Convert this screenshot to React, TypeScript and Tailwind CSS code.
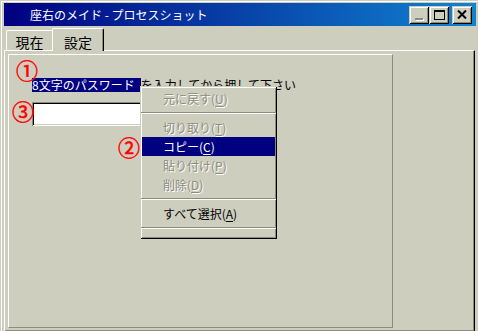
import React from "react";

function MenuItem({
  label,
  mn,
  disabled,
  active,
}: {
  label: string;
  mn: string;
  disabled?: boolean;
  active?: boolean;
}) {
  const color = active
    ? "bg-[#000080] text-white"
    : disabled
    ? "text-[#8c8c7c] [text-shadow:1px_1px_0_#ffffff]"
    : "text-black";
  return (
    <div className={`h-[19px] mx-[2px] pl-[21px] flex items-center text-[12px] leading-none whitespace-nowrap ${color}`}>
      <span>
        {label}(<span className="underline underline-offset-[2px]">{mn}</span>)
      </span>
    </div>
  );
}

function Sep() {
  return (
    <div className="h-[10px] mx-[1px] flex items-center">
      <div className="w-full h-[2px] border-t border-t-[#8c8c7c] border-b border-b-white" />
    </div>
  );
}

function CapBtn({ children }: { children: React.ReactNode }) {
  return (
    <div className="w-[20px] h-[18px] bg-[#cecebf] flex items-center justify-center shadow-[inset_1px_1px_0_#cecebf,inset_-1px_-1px_0_#000000,inset_2px_2px_0_#ffffff,inset_-2px_-2px_0_#8c8c7c]">
      {children}
    </div>
  );
}

export default function App() {
  return (
    <div className="relative w-[478px] h-[331px] overflow-hidden bg-[#cecebf] font-['Noto_Sans_CJK_JP','Noto_Sans',sans-serif] shadow-[inset_1px_1px_0_#cecebf,inset_2px_2px_0_#ffffff] pt-[3px]">
      {/* title bar */}
      <div className="ml-[4px] w-[472px] h-[23px] flex items-center bg-[linear-gradient(to_right,#000080,#1084d0)]">
        <div className="pl-[26px] text-white text-[12px] leading-none whitespace-nowrap">
          座右のメイド - プロセスショット
        </div>
        <div className="ml-auto mr-[4px] flex items-center">
          <CapBtn>
            <div className="w-[8px] h-[2px] bg-[#8c8c7c] shadow-[1px_1px_0_#ffffff] mt-[9px] mr-[1px]" />
          </CapBtn>
          <CapBtn>
            <div className="w-[11px] h-[10px] border border-black border-t-2" />
          </CapBtn>
          <div className="w-[3px]" />
          <CapBtn>
            <svg width="10" height="9" viewBox="0 0 10 9">
              <path d="M1 0.5 L9 8.5 M9 0.5 L1 8.5" stroke="#000" strokeWidth="2" />
            </svg>
          </CapBtn>
        </div>
      </div>

      {/* tabs */}
      <div className="flex items-end h-[24px]">
        <div className="ml-[6px] w-[48px] h-[20px] border-t border-l border-white rounded-tl-[2px] flex justify-center pr-[2px] text-[14px] leading-none text-black pt-[4px]">
          現在
        </div>
        <div className="relative z-10 -ml-[2px] -mb-[1px] w-[52px] h-[23px] bg-[#cecebf] border-t border-l border-white border-r border-r-black rounded-t-[2px] shadow-[inset_-1px_0_0_#8c8c7c] flex justify-center text-[14px] leading-none text-black pt-[6px]">
          設定
        </div>
      </div>

      {/* panel */}
      <div className="ml-[4px] w-[471px] h-[282px] border border-t-white border-l-white border-r-black border-b-black shadow-[inset_-1px_-1px_0_#8c8c7c] p-[3px]">
        <div className="w-[385px] h-[274px] border border-t-white border-l-white border-r-[#8c8c7c] border-b-[#8c8c7c] pt-[23px] pl-[23px]">
          <div className="flex h-[14px] items-center text-[12px] leading-[14px] whitespace-nowrap">
            <span className="bg-[#000080] text-white h-[14px] pr-[6px]">8文字のパスワード</span>
            <span className="text-black">を入力してから押して下さい</span>
          </div>
          <div className="mt-[10px] w-[150px] h-[24px] bg-white shadow-[inset_1px_1px_0_#8c8c7c,inset_-1px_-1px_0_#ffffff,inset_2px_2px_0_#000000,inset_-2px_-2px_0_#cecebf]" />
        </div>
      </div>

      {/* annotations */}
      <div className="absolute left-[16px] top-[58px] text-[22px] leading-none text-[#ff0000] [-webkit-text-stroke:0.5px_#ff0000]">①</div>
      <div className="absolute left-[12px] top-[99px] text-[22px] leading-none text-[#ff0000] [-webkit-text-stroke:0.5px_#ff0000]">③</div>

      {/* context menu */}
      <div className="absolute left-[140px] top-[86px] w-[137px] h-[153px] bg-[#cecebf] pt-[3px] shadow-[inset_1px_1px_0_#cecebf,inset_-1px_-1px_0_#000000,inset_2px_2px_0_#ffffff,inset_-2px_-2px_0_#8c8c7c]">
        <MenuItem label="元に戻す" mn="U" disabled />
        <Sep />
        <MenuItem label="切り取り" mn="T" disabled />
        <MenuItem label="コピー" mn="C" active />
        <MenuItem label="貼り付け" mn="P" disabled />
        <MenuItem label="削除" mn="D" disabled />
        <Sep />
        <MenuItem label="すべて選択" mn="A" />
        <Sep />
      </div>

      <div className="absolute left-[118px] top-[135px] text-[22px] leading-none text-[#ff0000] [-webkit-text-stroke:0.5px_#ff0000]">②</div>
    </div>
  );
}
